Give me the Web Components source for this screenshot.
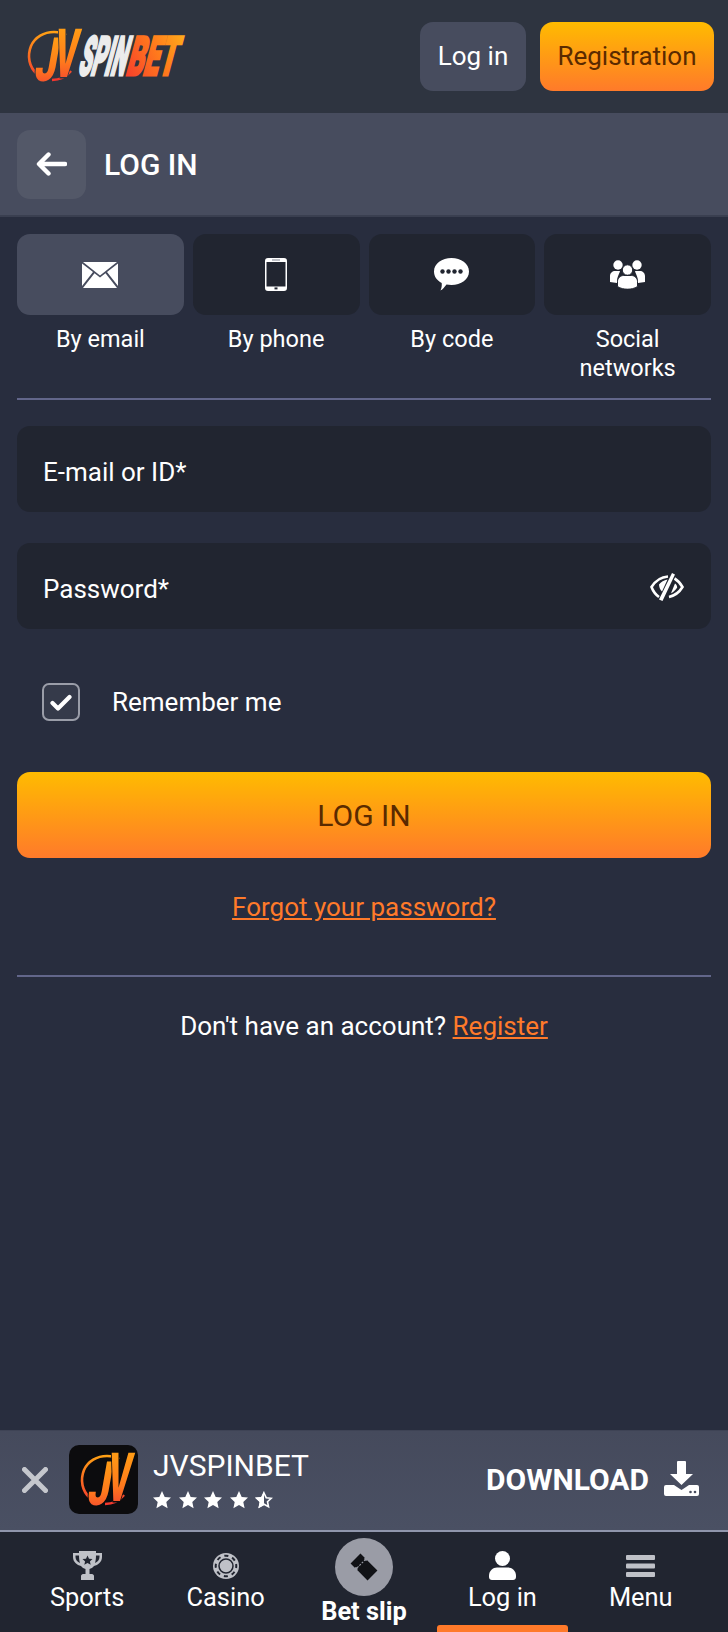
<!DOCTYPE html>
<html lang="en">
<head>
<meta charset="utf-8">
<title>Log in</title>
<style>
  html, body { margin: 0; padding: 0; }
  body {
    width: 728px;
    height: 1632px;
    overflow: hidden;
    display: flex;
    flex-direction: column;
    background: #282d3e;
    font-family: Roboto, "Liberation Sans", sans-serif;
    color: #fff;
  }
  login-page { flex: 1; }
</style>
</head>
<body>
<site-header></site-header>
<page-title>LOG IN</page-title>
<login-page></login-page>
<app-banner></app-banner>
<bottom-nav></bottom-nav>

<script>
const icons = {
  email: `<svg width="36" height="26" viewBox="0 0 36 26"><path fill="#fff" d="M1 0h34L18 13.500zM0 1.500 11 10 0 24zM36 1.500 25 10 36 24zM12.500 11.300 18 15.500l5.500-4.200L35 26H1z"/></svg>`,
  phone: `<svg width="22" height="33" viewBox="0 0 22 33"><path fill="#fff" fill-rule="evenodd" d="M3 0h16a3 3 0 0 1 3 3v27a3 3 0 0 1-3 3H3a3 3 0 0 1-3-3V3a3 3 0 0 1 3-3zM1.500 4v24.500h19V4z"/><rect x="9.500" y="29.400" width="3" height="2" fill="#212530"/><rect x="7" y="1" width="8" height="2" fill="#bfc1c7"/></svg>`,
  chat: `<svg width="35" height="33" viewBox="0 0 35 33"><path fill="#fff" d="M17.500 0C27 0 35 5.500 35 13.500S27 27 17.500 27c-2 0-3.500-.2-5-.5C10.500 29 9 31.500 6.500 32.500c1-2 1.500-5 1.200-7.500C3 22.500 0 18.500 0 13.500 0 5.500 8 0 17.500 0z"/><g fill="#212530"><circle cx="8.500" cy="13.500" r="2.200"/><circle cx="14.500" cy="13.500" r="2.200"/><circle cx="20.500" cy="13.500" r="2.200"/><circle cx="26.500" cy="13.500" r="2.200"/></g></svg>`,
  people: `<svg width="35" height="29" viewBox="0 0 35 29"><g fill="#fff"><circle cx="8" cy="5" r="4.700"/><circle cx="27" cy="5" r="4.700"/><path d="M0 22v-6c0-3 2.500-5 5-5h5c-1 4-3 5-3 12zM35 22v-6c0-3-2.500-5-5-5h-5c1 4 3 5 3 12z"/><circle cx="17.500" cy="10" r="5.200" stroke="#212530" stroke-width="1"/><path stroke="#212530" d="M7.500 26.500v-5c0-3.500 3-6 6-6h8c3 0 6 2.500 6 6v5c-3 2-6.500 2.700-10 2.700s-7-.7-10-2.700z"/></g></svg>`,
  eye: `<svg width="34" height="28" viewBox="0 0 34 28"><g fill="none" stroke="#fff" stroke-width="2.600"><path d="M9 24C5.500 21.500 3 18 1.500 14 5 8.500 11 4 18 3.500"/><path d="M24.500 5.500c3.500 2 6 5 8 8.500-3 5-7.500 8.500-13.500 10"/></g><path fill="#fff" d="M22 0l3 1.500L12.500 28 9 26.500zM9 11.500c2-2.500 5-4.500 8.500-5l-5.500 12c-2-2-3-4.500-3-7zM25 10.500c1.500 1 2.200 2.500 2.200 4-1.500 2.500-3.500 4.500-6.200 5.700z"/></svg>`,
  check: `<svg width="22" height="17" viewBox="0 0 22 17"><path fill="none" stroke="#fff" stroke-width="4.200" stroke-linecap="round" stroke-linejoin="round" d="M2.500 9l5.500 5.500L19.500 3"/></svg>`,
  back: `<svg width="31" height="24" viewBox="0 0 31 24"><path fill="none" stroke="#fff" stroke-width="4.400" stroke-linecap="round" stroke-linejoin="round" d="M12.500 2.500 3 12l9.500 9.500M3.500 12H29"/></svg>`,
  close: `<svg width="26" height="26" viewBox="0 0 26 26"><path stroke="#c5c7cd" stroke-width="5" stroke-linecap="round" d="M2.500 2.500l21 21M23.500 2.500l-21 21"/></svg>`,
  download: `<svg width="35" height="35" viewBox="0 0 35 35"><path fill="#fff" d="M14 0h7a1 1 0 0 1 1 1v12h7L17.500 24 6 13h7V1a1 1 0 0 1 1-1z"/><path fill="#fff" d="M2 24h8l7.500 5 7.500-5h8a2 2 0 0 1 2 2v7a2 2 0 0 1-2 2H2a2 2 0 0 1-2-2v-7a2 2 0 0 1 2-2z"/><circle cx="26.500" cy="31" r="1.300" fill="#474c5e"/><circle cx="31" cy="31" r="1.300" fill="#474c5e"/></svg>`,
  trophy: `<svg width="29" height="29" viewBox="0 0 29 29"><path fill="#bfc1c7" d="M6 0h17v2h6v4c0 5-4 8-8 9-1 1.500-3 2.500-4.500 3v5H19c1 0 2 1 2 2v4H8v-4c0-1 1-2 2-2h2.500v-5c-1.500-.5-3.500-1.500-4.500-3-4-1-8-4-8-9V2h6zM2.500 4.500V6c0 3 2 5 4.500 6-.6-2-1-4.500-1-7.500zm24 0H23c0 3-.4 5.500-1 7.500 2.500-1 4.500-3 4.500-6z"/><path fill="#212530" d="M14.500 4.500l1.500 3.200 3.500.4-2.600 2.300.8 3.400-3.200-1.700-3.200 1.700.8-3.400-2.600-2.300 3.500-.4z"/></svg>`,
  chip: `<svg width="26" height="26" viewBox="0 0 26 26"><circle cx="13" cy="13" r="13" fill="#bfc1c7"/><circle cx="13" cy="13" r="7" fill="none" stroke="#212530" stroke-width="1.500"/><circle cx="13" cy="13" r="10.300" fill="none" stroke="#212530" stroke-width="2" stroke-dasharray="4 4.090" transform="rotate(-11 13 13)"/></svg>`,
  ticket: `<svg width="30" height="30" viewBox="0 0 30 30"><g transform="rotate(-45 15 15)"><path fill="#111216" d="M8 3h14v6a1.700 1.700 0 0 0 0 3.400V27H8V12.400A1.700 1.700 0 0 0 8 9z"/><path stroke="#9a9ca6" stroke-width="1.100" stroke-dasharray="2 1.300" d="M9.500 10.700h11"/></g></svg>`,
  user: `<svg width="27" height="29" viewBox="0 0 27 29"><circle cx="13.500" cy="7.500" r="7.500" fill="#fff"/><path fill="#fff" d="M0 25c0-5.500 4-8.500 8-8.500h11c4 0 8 3 8 8.500v1c0 1.700-1.300 3-3 3H3c-1.700 0-3-1.300-3-3z"/></svg>`,
  menu: `<svg width="29" height="22" viewBox="0 0 29 22"><g fill="#bfc1c7"><rect width="29" height="5" rx="1"/><rect y="8.500" width="29" height="5" rx="1"/><rect y="17" width="29" height="5" rx="1"/></g></svg>`,
};

const starPath = "M9 0l2.700 5.900 6.300.7-4.700 4.300 1.300 6.300L9 14l-5.600 3.200 1.300-6.300L0 6.600l6.300-.7z";
const logoFont = `font-family="Roboto, 'Liberation Sans', sans-serif" font-weight="900"`;

// circle and JV mark, the letters stay real <text>
function jvMark(id, edge) {
  return `
    <defs>
      <linearGradient id="jv${id}" x1="0" y1="0" x2="0" y2="1">
        <stop offset="0" stop-color="#ffac12"/><stop offset=".6" stop-color="#ff7a1c"/><stop offset="1" stop-color="#f0303a"/>
      </linearGradient>
      <linearGradient id="ring${id}" gradientUnits="userSpaceOnUse" x1="25" y1="6" x2="25" y2="56">
        <stop offset="0" stop-color="#ffa214"/><stop offset="1" stop-color="#f4352f"/>
      </linearGradient>
    </defs>
    <path fill="none" stroke="url(#ring${id})" stroke-width="2.600" d="M9 49C1 42-1 31 3 21 7 12 16 7 26 7c5 0 9 1 12 3M43 46c-5 6-11 9-19 9"/>
    <g ${logoFont} paint-order="stroke" stroke="${edge}" stroke-width="3">
      <text transform="translate(5 56) skewX(-10) scale(.66 1.020)" font-size="60" fill="url(#jv${id})">J</text>
      <text transform="translate(24 52) skewX(-8) scale(.52 1)" font-size="68" fill="url(#jv${id})">V</text>
    </g>`;
}

class SiteHeader extends HTMLElement {
  constructor() {
    super();
    this.attachShadow({ mode: "open" });
    this.shadowRoot.innerHTML = `
      <style>
        :host {
          display: flex;
          align-items: center;
          justify-content: space-between;
          height: 113px;
          padding: 0 14px 0 28px;
          box-sizing: border-box;
          background: #2e3440;
        }
        .logo { display: flex; margin-top: 3px; }
        .logo svg { overflow: visible; }
        .actions { display: flex; gap: 14px; margin-top: -1px; }
        .btn {
          height: 69px;
          display: flex;
          align-items: center;
          justify-content: center;
          border-radius: 13px;
          font-size: 26px;
          box-sizing: border-box;
        }
        .login { width: 106px; background: #474c5e; color: #fff; }
        .register {
          width: 174px;
          background: linear-gradient(#ffbb00, #ff7a2a);
          color: #5a2a00;
        }
      </style>
      <div class="logo">
        <svg width="165" height="66" viewBox="0 0 165 66">
          <defs>
            <linearGradient id="bet" x1="0" y1="1" x2="1" y2="0">
              <stop offset="0" stop-color="#f5302f"/><stop offset=".55" stop-color="#ff7a1c"/><stop offset="1" stop-color="#ffb71a"/>
            </linearGradient>
          </defs>
          ${jvMark("a", "#2e3440")}
          <g ${logoFont} font-size="54" stroke-width="3">
            <text transform="translate(49 50) skewX(-15) scale(.38 1)" fill="#ececec" stroke="#ececec">SPIN</text>
            <text transform="translate(97 50) skewX(-15) scale(.49 1)" fill="url(#bet)" stroke="url(#bet)">BET</text>
          </g>
        </svg>
      </div>
      <div class="actions">
        <div class="btn login">Log in</div>
        <div class="btn register">Registration</div>
      </div>`;
  }
}
customElements.define("site-header", SiteHeader);

class PageTitle extends HTMLElement {
  constructor() {
    super();
    this.attachShadow({ mode: "open" });
    this.shadowRoot.innerHTML = `
      <style>
        :host {
          display: flex;
          align-items: center;
          gap: 18px;
          height: 104px;
          padding: 0 17px;
          box-sizing: border-box;
          background: #474c5e;
          border-bottom: 2px solid #3a3f50;
          font-size: 30px;
          font-weight: 500;
        }
        .back {
          width: 69px;
          height: 69px;
          display: flex;
          align-items: center;
          justify-content: center;
          border-radius: 13px;
          background: #535868;
        }
      </style>
      <div class="back">${icons.back}</div>
      <slot></slot>`;
  }
}
customElements.define("page-title", PageTitle);

class MethodTab extends HTMLElement {
  constructor() {
    super();
    this.attachShadow({ mode: "open" });
    this.shadowRoot.innerHTML = `
      <style>
        :host {
          display: flex;
          flex-direction: column;
          align-items: center;
          font-size: 23.500px;
          line-height: 29px;
          text-align: center;
        }
        .box {
          width: 100%;
          height: 81px;
          display: flex;
          align-items: center;
          justify-content: center;
          border-radius: 13px;
          background: #212530;
          margin-bottom: 10px;
        }
        .label { padding: 0 16px; }
        :host([active]) .box { background: #474c5e; }
      </style>
      <div class="box">${icons[this.getAttribute("icon")]}</div>
      <div class="label"><slot></slot></div>`;
  }
}
customElements.define("method-tab", MethodTab);

class TextField extends HTMLElement {
  constructor() {
    super();
    this.attachShadow({ mode: "open" });
    this.shadowRoot.innerHTML = `
      <style>
        :host {
          display: flex;
          align-items: center;
          justify-content: space-between;
          height: 86px;
          padding: 0 27px 0 26px;
          box-sizing: border-box;
          border-radius: 13px;
          background: #212530;
          font-size: 26px;
        }
        .text { padding-top: 5px; }
        svg { display: block; margin-top: 1px; }
      </style>
      <div class="text"><slot></slot></div>
      ${this.hasAttribute("eye") ? icons.eye : ""}`;
  }
}
customElements.define("text-field", TextField);

class RememberCheck extends HTMLElement {
  constructor() {
    super();
    this.attachShadow({ mode: "open" });
    this.shadowRoot.innerHTML = `
      <style>
        :host {
          display: flex;
          align-items: center;
          gap: 32px;
          padding-left: 25px;
          font-size: 26px;
        }
        .box {
          width: 38px;
          height: 38px;
          box-sizing: border-box;
          display: flex;
          align-items: center;
          justify-content: center;
          border: 2px solid #9a9da8;
          border-radius: 7px;
          background: #353a4a;
        }
      </style>
      <div class="box">${icons.check}</div>
      <slot></slot>`;
  }
}
customElements.define("remember-check", RememberCheck);

class LoginPage extends HTMLElement {
  constructor() {
    super();
    this.attachShadow({ mode: "open" });
    this.shadowRoot.innerHTML = `
      <style>
        :host {
          display: block;
          padding: 17px 17px 0;
          box-sizing: border-box;
        }
        .tabs {
          display: grid;
          grid-template-columns: repeat(4, 1fr);
          gap: 9px;
          height: 164px;
        }
        hr {
          height: 2px;
          margin: 0;
          border: 0;
          background: #62668a;
        }
        .fields { display: grid; gap: 31px; margin-top: 26px; }
        remember-check { margin-top: 54px; }
        .submit {
          height: 86px;
          margin-top: 51px;
          display: flex;
          align-items: center;
          justify-content: center;
          border-radius: 13px;
          background: linear-gradient(#ffbb00, #ff7a2a);
          color: #5a2a00;
          font-size: 30px;
        }
        a { color: #ff7a2a; }
        .forgot {
          margin-top: 35px;
          text-align: center;
          font-size: 26px;
          line-height: 29px;
        }
        .rule2 { margin-top: 53px; }
        .signup {
          margin-top: 35px;
          text-align: center;
          font-size: 26px;
          line-height: 29px;
        }
      </style>
      <div class="tabs">
        <method-tab icon="email" active>By email</method-tab>
        <method-tab icon="phone">By phone</method-tab>
        <method-tab icon="chat">By code</method-tab>
        <method-tab icon="people">Social networks</method-tab>
      </div>
      <hr>
      <div class="fields">
        <text-field>E-mail or ID*</text-field>
        <text-field eye>Password*</text-field>
      </div>
      <remember-check>Remember me</remember-check>
      <div class="submit">LOG IN</div>
      <div class="forgot"><a href="#">Forgot your password?</a></div>
      <hr class="rule2">
      <div class="signup">Don't have an account? <a href="#">Register</a></div>`;
  }
}
customElements.define("login-page", LoginPage);

class AppBanner extends HTMLElement {
  constructor() {
    super();
    this.attachShadow({ mode: "open" });
    const stars = [0, 1, 2, 3].map(() => `<svg width="18" height="18" viewBox="0 0 18 18"><path fill="#fff" d="${starPath}"/></svg>`).join("");
    this.shadowRoot.innerHTML = `
      <style>
        :host {
          display: flex;
          align-items: center;
          height: 102px;
          padding: 0 29px 2px 22px;
          box-sizing: border-box;
          background: linear-gradient(#454a5c, #4a5063);
          border-bottom: 2px solid #9096ac;
          border-top: 1px solid #3e4355;
        }
        .close { display: flex; margin-right: 21px; }
        .icon {
          display: flex;
          width: 69px;
          height: 69px;
          border-radius: 10px;
          background: #0c0c0e;
          margin-right: 15px;
        }
        .icon svg { overflow: visible; }
        .info { flex: 1; }
        .name { font-size: 30px; line-height: 36px; margin-top: -3px; }
        .stars { display: flex; gap: 7.500px; height: 18px; margin-top: 7px; }
        .download {
          display: flex;
          align-items: center;
          gap: 15px;
          font-size: 30px;
          font-weight: 700;
        }
        .download svg { display: block; margin-top: -2px; }
      </style>
      <div class="close">${icons.close}</div>
      <div class="icon"><svg width="69" height="69" viewBox="-12 -4 69 69">${jvMark("b", "#0c0c0e")}</svg></div>
      <div class="info">
        <div class="name">JVSPINBET</div>
        <div class="stars">${stars}<svg width="18" height="18" viewBox="0 0 18 18"><path fill="none" stroke="#fff" stroke-width="1.600" d="M9 2l2.200 4.700 5 .6-3.700 3.400 1 5L9 13.200l-4.500 2.500 1-5L1.800 7.300l5-.6z"/><path fill="#fff" d="M9 0v14l-5.600 3.200 1.300-6.300L0 6.600l6.300-.7z"/></svg></div>
      </div>
      <div class="download">DOWNLOAD ${icons.download}</div>`;
  }
}
customElements.define("app-banner", AppBanner);

class NavItem extends HTMLElement {
  constructor() {
    super();
    this.attachShadow({ mode: "open" });
    this.shadowRoot.innerHTML = `
      <style>
        :host {
          position: relative;
          display: flex;
          flex-direction: column;
          align-items: center;
          font-size: 25.400px;
          line-height: 30px;
          padding-top: 19px;
        }
        .icon { height: 29px; display: flex; align-items: center; margin-bottom: 2px; }
        .badge {
          width: 58px;
          height: 58px;
          margin: -13px 0 0;
          display: flex;
          align-items: center;
          justify-content: center;
          border-radius: 50%;
          background: #9a9ca6;
        }
        :host([strong]) { font-weight: 700; }
        :host([current])::after {
          content: "";
          position: absolute;
          left: 4px;
          right: 4px;
          bottom: 0;
          height: 7px;
          border-radius: 3px 3px 0 0;
          background: #ff7a2a;
        }
      </style>
      <div class="${this.hasAttribute("strong") ? "badge" : "icon"}">${icons[this.getAttribute("icon")]}</div>
      <div class="text"><slot></slot></div>`;
  }
}
customElements.define("nav-item", NavItem);

class BottomNav extends HTMLElement {
  constructor() {
    super();
    this.attachShadow({ mode: "open" });
    this.shadowRoot.innerHTML = `
      <style>
        :host {
          display: grid;
          grid-template-columns: repeat(5, 1fr);
          height: 100px;
          padding: 0 18px;
          box-sizing: border-box;
          background: #212530;
        }
      </style>
      <nav-item icon="trophy">Sports</nav-item>
      <nav-item icon="chip">Casino</nav-item>
      <nav-item icon="ticket" strong>Bet slip</nav-item>
      <nav-item icon="user" current>Log in</nav-item>
      <nav-item icon="menu">Menu</nav-item>`;
  }
}
customElements.define("bottom-nav", BottomNav);
</script>
</body>
</html>
